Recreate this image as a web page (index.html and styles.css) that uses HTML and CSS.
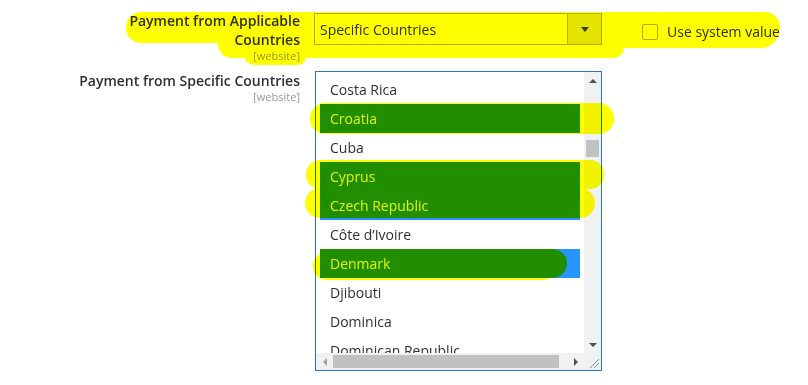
FILE: index.html
```html
<!DOCTYPE html>
<html>
    <head>
        <meta charset="utf-8">
        <title>Payment countries</title>
        <link rel="stylesheet" href="styles.css">
    </head>
    <body>
        <div class="page">
            <div class="row">
                <div class="label">
                    <span class="label-text">Payment from Applicable Countries</span>
                    <span class="scope">[website]</span>
                </div>
                <div class="control">
                    <div class="select">
                        <span class="select-text">Specific Countries</span>
                        <span class="select-btn"><i class="caret"></i></span>
                    </div>
                </div>
                <label class="usesys"><span class="box"></span>Use system value</label>
            </div>

            <div class="row row-list">
                <div class="label">
                    <span class="label-text">Payment from Specific Countries</span>
                    <span class="scope">[website]</span>
                </div>
                <div class="control">
                    <div class="listbox">
                        <div class="options">
                            <div class="opt">Costa Rica</div>
                            <div class="opt sel">Croatia</div>
                            <div class="opt">Cuba</div>
                            <div class="opt sel">Cyprus</div>
                            <div class="opt sel sel-last">Czech Republic</div>
                            <div class="opt">Côte d’Ivoire</div>
                            <div class="opt dk"><span class="ink">Denmark</span></div>
                            <div class="opt">Djibouti</div>
                            <div class="opt">Dominica</div>
                            <div class="opt">Dominican Republic</div>
                        </div>
                        <div class="vscroll">
                            <span class="arr"><i class="tri-up"></i></span>
                            <span class="track"><i class="vthumb"></i></span>
                            <span class="arr"><i class="tri-down"></i></span>
                        </div>
                        <div class="hscroll">
                            <span class="arr"><i class="tri-left"></i></span>
                            <span class="track"><i class="hthumb"></i></span>
                            <span class="arr"><i class="tri-right"></i></span>
                        </div>
                        <div class="corner">
                            <svg width="17" height="17" viewBox="0 0 17 17">
                                <path d="M6 15 L15 6 M10 15 L15 10" stroke="#8a8a8a" stroke-width="1" fill="none"/>
                            </svg>
                        </div>
                    </div>
                </div>
            </div>

            <!-- highlighter marks drawn over the screenshot -->
            <div class="marks">
                <i class="mk mk-top"></i>
                <i class="mk mk-under"></i>
                <i class="mk mk-scope"></i>
                <i class="mk mk-right"></i>
                <i class="mk mk-croatia"></i>
                <i class="mk mk-cyprus"></i>
                <i class="mk mk-czech"></i>
                <i class="mk mk-denmark"></i>
            </div>
        </div>
    </body>
</html>
```

FILE: styles.css
```css
*{
    margin:0px;
    padding:0px;
    box-sizing:border-box;
}
body{
    background:#fff;
    font-family:"Open Sans","Liberation Sans",sans-serif;
    font-size:14px;
    color:#303030;
}
.page{
    position:relative;      /*for the marks layer*/
    width:808px;
    height:385px;
    padding:11px 0 0 72px;
}
.row{
    display:grid;
    grid-template-columns:228px 288px auto;
    column-gap:14px;
    align-items:start;
}
.row-list{
    margin-top:9px;
}
.label{
    display:flex;
    flex-direction:column;
    align-items:flex-end;
    text-align:right;
    font-weight:600;
    line-height:19px;
}
.scope{
    font-size:11px;
    line-height:13px;
    font-weight:400;
    color:#999;
}

/* single select */
.select{
    margin-top:2px;
    height:32px;
    border:1px solid #adadad;
    display:flex;
    align-items:center;
    background:#fff;
}
.select-text{
    flex:1;
    padding-left:5px;
}
.select-btn{
    width:34px;
    height:30px;
    border-left:1px solid #adadad;
    background:#e3e3e3;
    display:flex;
    align-items:center;
    justify-content:center;
}
.caret{
    border-left:4px solid transparent;
    border-right:4px solid transparent;
    border-top:5px solid #41362f;
}
.usesys{
    margin:11px 0 0 26px;
    display:flex;
    align-items:center;
    gap:9px;
}
.box{
    width:16px;
    height:16px;
    border:1px solid #adadad;
    border-radius:2px;
    background:#fff;
}

/* multi select */
.listbox{
    margin-left:1px;
    width:287px;
    height:300px;
    border:1px solid #1e7bc9;
    display:grid;
    grid-template-columns:268px 17px;
    grid-template-rows:281px 17px;
    background:#fff;
}
.options{
    overflow:hidden;
    padding:3px 4px 0;
}
.opt{
    height:29px;
    line-height:29px;
    padding-left:10px;
    white-space:nowrap;
}
.opt.sel{
    background:#218e00;
    color:#e4f200;
}
.opt.sel-last{
    box-shadow:inset 0 -2px 0 #2895ff;
}
.opt.dk{
    padding-left:0;
    background:#2895ff;
    color:#e4f200;
}
.ink{
    display:block;
    width:247px;
    height:29px;
    padding-left:10px;
    background:#218e00;
    border-radius:0 15px 15px 0;
}
.vscroll,.hscroll,.corner{
    background:#f1f1f1;
    display:flex;
}
.vscroll{
    flex-direction:column;
}
.arr{
    width:17px;
    height:17px;
    display:flex;
    align-items:center;
    justify-content:center;
}
.track{
    flex:1;
}
.vthumb{
    display:block;
    margin:51px 2px 0;
    height:17px;
    background:#c1c1c1;
}
.hthumb{
    display:block;
    margin-top:2px;
    width:226px;
    height:13px;
    background:#c1c1c1;
}
.tri-up{
    border-left:4px solid transparent;
    border-right:4px solid transparent;
    border-bottom:4px solid #505050;
}
.tri-down{
    border-left:4px solid transparent;
    border-right:4px solid transparent;
    border-top:4px solid #505050;
}
.tri-left{
    border-top:4px solid transparent;
    border-bottom:4px solid transparent;
    border-right:4px solid #a3a3a3;
}
.tri-right{
    border-top:4px solid transparent;
    border-bottom:4px solid transparent;
    border-left:4px solid #505050;
}

/* yellow highlighter, multiplied over the page */
.marks{
    position:absolute;
    left:0;
    top:0;
    width:808px;
    height:385px;
    pointer-events:none;
}
.mk{
    position:absolute;
    display:block;
    background:#ffff00;
    mix-blend-mode:multiply;
}
.mk-top{left:126px;top:12px;width:654px;height:31px;border-radius:15px;}
.mk-under{left:218px;top:28px;width:406px;height:30px;border-radius:0 0 10px 14px;}
.mk-scope{left:244px;top:44px;width:62px;height:21px;border-radius:0 0 8px 10px;}
.mk-right{left:600px;top:12px;width:178px;height:36px;border-radius:16px;}
.mk-croatia{left:310px;top:103px;width:304px;height:31px;border-radius:15px;}
.mk-cyprus{left:306px;top:160px;width:298px;height:29px;border-radius:14px;}
.mk-czech{left:305px;top:188px;width:290px;height:30px;border-radius:15px;}
.mk-denmark{left:313px;top:252px;width:244px;height:28px;border-radius:14px;}
```
